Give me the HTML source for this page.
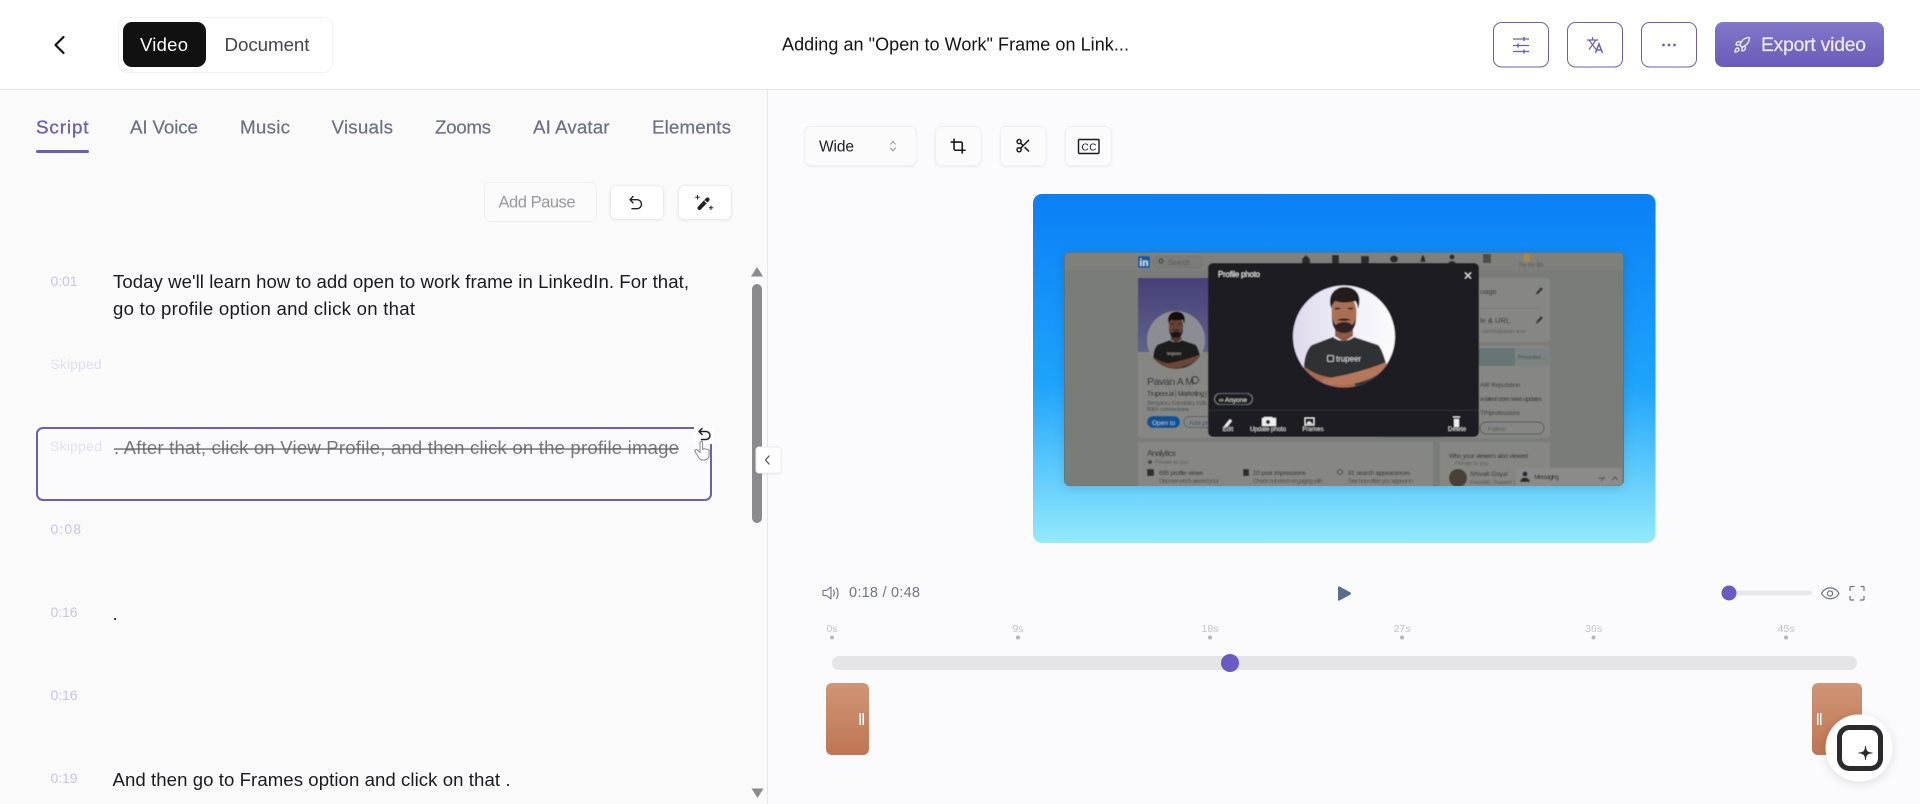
<!DOCTYPE html>
<html lang="en"><head><meta charset="utf-8"><title>Video editor</title>
<style>html,body{margin:0;padding:0;width:1920px;height:804px;overflow:hidden;background:#fbfbfd}svg{display:block}text{white-space:pre}</style></head>
<body>
<svg xmlns="http://www.w3.org/2000/svg" width="1920" height="804" viewBox="0 0 1920 804" font-family="'Liberation Sans',sans-serif">
<defs>
<linearGradient id="exp" x1="0" y1="0" x2="0" y2="1"><stop offset="0" stop-color="#8277cb"/><stop offset="1" stop-color="#6a5bb9"/></linearGradient>
<linearGradient id="blue" x1="0" y1="0" x2="0" y2="1"><stop offset="0" stop-color="#0a7ff6"/><stop offset=".55" stop-color="#1ea4fb"/><stop offset="1" stop-color="#93eafc"/></linearGradient>
<linearGradient id="clip" x1="0" y1="0" x2="0" y2="1"><stop offset="0" stop-color="#cf9676"/><stop offset="1" stop-color="#bf7552"/></linearGradient>
<linearGradient id="cover" x1="0" y1="0" x2="0" y2="1"><stop offset="0" stop-color="#45417a"/><stop offset="1" stop-color="#62618a"/></linearGradient>
<linearGradient id="phbg" x1="0" y1="0" x2="1" y2="0"><stop offset="0" stop-color="#dedaee"/><stop offset=".6" stop-color="#f2f0f9"/><stop offset="1" stop-color="#fbfbfd"/></linearGradient>
<clipPath id="c1"><circle cx="1344" cy="336.500" r="51"/></clipPath>
<clipPath id="c2"><circle cx="1176" cy="340" r="29"/></clipPath>
<clipPath id="scr"><rect x="1064" y="252" width="560" height="234" rx="6"/></clipPath>
<filter id="soft" x="-5%" y="-5%" width="110%" height="110%"><feGaussianBlur stdDeviation=".45"/></filter>
<filter id="sh" x="-10%" y="-10%" width="120%" height="125%"><feDropShadow dx="0" dy="2" stdDeviation="5" flood-color="#000" flood-opacity=".25"/></filter>
<filter id="sh2" x="-30%" y="-30%" width="160%" height="160%"><feDropShadow dx="0" dy="2" stdDeviation="5" flood-color="#000" flood-opacity=".12"/></filter>
<filter id="sh3" x="-20%" y="-20%" width="140%" height="140%"><feDropShadow dx="0" dy="1" stdDeviation="1" flood-color="#000" flood-opacity=".07"/></filter>
<g id="person">
<path d="M1335 320h18v16l-9 6-9-6z" fill="#8d5a44"/>
<path d="M1304 368c0-9 3-19 8-23l21-8c6 5 15 5 21 0l24 8c4 4 6 12 8 18l-6 14-8 14h-58l-10-16z" fill="#2f3234"/>
<ellipse cx="1344" cy="313" rx="12.500" ry="19.500" fill="#a96f56"/>
<path d="M1331.500 309c-5-13 3-22 13-22 12 0 18 9 13.500 22-.5-4-1.500-7-3-8-7 2-14 2-20 0-1.500 2-3 4-3.500 8z" fill="#211d1c"/>
<path d="M1332 316c1 5 2 8 4 9 3-4 13-4 16 0 2-1 3-4 4-9 .5 9-2 17-12 17s-12.500-8-12-17z" fill="#2f2420"/>
<path d="M1337 320c3-2 11-2 14 0-4 1-10 1-14 0z" fill="#2a1f1b"/>
<path d="M1335 308.500h5M1348 308.500h5" stroke="#1d1715" stroke-width="1.500"/>
<path d="M1305 367c5 4 11 7 18 9 10 2 20 5 28 6 4 1 6 3 3 5l-16 1c-12-2-27-8-37-19z" fill="#a96a50"/>
<path d="M1386 362c-16 7-38 13-62 17-3 1-3 4 0 5 22 3 45-1 60-14 2-2 3-5 2-8z" fill="#b4775c"/>
</g>
</defs>

<!-- backgrounds -->
<rect width="1920" height="804" fill="#fbfbfd"/>
<rect y="90" width="767" height="714" fill="#fafafb"/>
<rect x="767" y="90" width="1" height="714" fill="#e7e7ea"/>
<rect width="1920" height="89" fill="#fff"/>
<rect y="89" width="1920" height="1" fill="#e6e6e8"/>

<!-- top bar -->
<path d="M63.500 37l-8 8 8 8" fill="none" stroke="#111" stroke-width="2.200" stroke-linecap="round" stroke-linejoin="round"/>
<rect x="118.500" y="17.500" width="214" height="55" rx="9" fill="#fff" stroke="#f1f1f3"/>
<rect x="123" y="22" width="83" height="45" rx="9" fill="#111"/>
<text x="140" y="51" font-size="18.500" fill="#fff" textLength="48" lengthAdjust="spacing">Video</text>
<text x="224.500" y="51" font-size="18.800" fill="#44444c" textLength="85" lengthAdjust="spacing">Document</text>
<text x="782" y="50.500" font-size="18" fill="#141414" textLength="347" lengthAdjust="spacing">Adding an "Open to Work" Frame on Link...</text>

<g fill="#fff" stroke="#6c5db8" stroke-width="1">
<rect x="1493.500" y="22.500" width="55" height="44.500" rx="8"/>
<rect x="1567.500" y="22.500" width="55" height="44.500" rx="8"/>
<rect x="1641.500" y="22.500" width="55" height="44.500" rx="8"/>
</g>
<g fill="none" stroke="#6c5db8" stroke-width="1.200">
<path d="M1513 39h16M1513 45.500h16M1513 51.500h16"/><path d="M1524 37v4M1518 43.500v4M1524 49.500v4" stroke-width="1.500"/>
<path d="M1587 40h11M1592.500 37v3M1589 40l7 9.500M1596 40l-7 9.500"/><path d="M1595.500 53l3.500-9 3.500 9M1597 50h4.500" stroke-width="1.500"/>
</g>
<g fill="#6c5db8"><circle cx="1663.500" cy="45" r="1.400"/><circle cx="1669" cy="45" r="1.400"/><circle cx="1674.500" cy="45" r="1.400"/></g>
<rect x="1715" y="22" width="169" height="45" rx="8" fill="url(#exp)"/>
<g transform="translate(1733 36) scale(.75)" fill="none" stroke="#f2f0fa" stroke-width="1.800" stroke-linecap="round" stroke-linejoin="round">
<path d="M4.500 16.500c-1.500 1.260-2 5-2 5s3.740-.5 5-2c.71-.84.7-2.130-.09-2.910a2.180 2.180 0 0 0-2.910-.09z"/>
<path d="m12 15-3-3a22 22 0 0 1 2-3.950A12.880 12.880 0 0 1 22 2c0 2.720-.78 7.500-6 11a22.350 22.350 0 0 1-4 2z"/>
<path d="M9 12H4s.55-3.030 2-4c1.620-1.080 5 0 5 0"/><path d="M12 15v5s3.030-.55 4-2c1.080-1.620 0-5 0-5"/></g>
<text x="1761" y="51" font-size="19.300" fill="#eeecf8" stroke="#eeecf8" stroke-width=".2" textLength="105" lengthAdjust="spacing">Export video</text>

<!-- tabs -->
<g font-size="18.800" fill="#6c7082" stroke="#6c7082" stroke-width=".2">
<text x="36" y="133.500" fill="#6c5db8" stroke="#6c5db8" stroke-width=".35" textLength="52.500" lengthAdjust="spacing">Script</text>
<text x="130" y="133.500" textLength="68" lengthAdjust="spacing">AI Voice</text>
<text x="240" y="133.500" textLength="50" lengthAdjust="spacing">Music</text>
<text x="331.500" y="133.500" textLength="61.500" lengthAdjust="spacing">Visuals</text>
<text x="435" y="133.500" textLength="56" lengthAdjust="spacing">Zooms</text>
<text x="533" y="133.500" textLength="76.500" lengthAdjust="spacing">AI Avatar</text>
<text x="652" y="133.500" textLength="79" lengthAdjust="spacing">Elements</text>
</g>
<rect x="36" y="150" width="53" height="3" rx="1.500" fill="#6c5db8"/>

<!-- tool row -->
<rect x="484.500" y="182.500" width="112" height="39" rx="6" fill="#fafafa" stroke="#f0f0f2"/>
<text x="498.500" y="207.500" font-size="16.500" fill="#9a9a9e" textLength="77" lengthAdjust="spacing">Add Pause</text>
<rect x="610.500" y="185.500" width="53" height="34" rx="6" fill="#fff" stroke="#ececef" filter="url(#sh3)"/>
<rect x="678.500" y="185.500" width="53" height="34" rx="6" fill="#fff" stroke="#ececef" filter="url(#sh3)"/>
<path d="M633 196.500l-3 3.200 3 3.200M630.500 199.700h6.500a4.500 4.500 0 0 1 0 9h-5" fill="none" stroke="#222" stroke-width="1.400" stroke-linecap="round" stroke-linejoin="round"/>
<path d="M699.500 208l8-8.500" stroke="#222" stroke-width="4" stroke-linecap="round"/>
<path d="M704.500 200.500l2.500 2.500" stroke="#fff" stroke-width="1"/>
<path d="M697.500 195v4.500M695.300 197.200h4.400M711 205.500v4.500M708.800 207.800h4.400" stroke="#222" stroke-width="1"/>

<!-- script -->
<g font-size="14" fill="#c8c4ea">
<text x="50.500" y="286" textLength="27" lengthAdjust="spacing">0:01</text>
<text x="50.500" y="369" fill="#dfdcf3" textLength="51" lengthAdjust="spacing">Skipped</text>
<text x="50.500" y="534" textLength="30.500" lengthAdjust="spacing">0:08</text>
<text x="50.500" y="617" textLength="27" lengthAdjust="spacing">0:16</text>
<text x="50.500" y="700" textLength="27" lengthAdjust="spacing">0:16</text>
<text x="50.500" y="783" textLength="27" lengthAdjust="spacing">0:19</text>
</g>
<g font-size="18.600" fill="#1b1b1f">
<text x="113" y="288" textLength="576" lengthAdjust="spacing">Today we'll learn how to add open to work frame in LinkedIn. For that,</text>
<text x="113" y="315" textLength="302" lengthAdjust="spacing">go to profile option and click on that</text>
<text x="112.500" y="786" textLength="398" lengthAdjust="spacing">And then go to Frames option and click on that .</text>
<text x="112.500" y="620">.</text>
</g>
<rect x="37" y="428" width="674" height="72" rx="6" fill="#fbfbfd" stroke="#6c5db8" stroke-width="2"/>
<text x="50" y="451" font-size="14" fill="#e2e0f1" textLength="52" lengthAdjust="spacing">Skipped</text>
<text x="114" y="454" font-size="18.600" fill="#77777c" textLength="565" lengthAdjust="spacing">. After that, click on View Profile, and then click on the profile image</text>
<rect x="114" y="448.400" width="565" height="1.300" fill="#606066"/>
<rect x="694" y="426" width="19" height="18" fill="#fff"/>
<path d="M702 428.500l-3 3 3 3M699.500 431.500h6.500a4 4 0 0 1 0 8h-4.500" fill="none" stroke="#222" stroke-width="1.500" stroke-linecap="round" stroke-linejoin="round"/>
<path d="M700 442c1-1.500 2.600-1 2.600.5v7l1.500-.7 1.500.2 1.800.3 1.700.7v5c0 3-2 5-5 5h-1c-2.500 0-3.500-1.200-4.700-3l-3.400-5.500c-.7-1.500 1.200-2.600 2.400-1.500l2.600 2.500z" fill="#fff" stroke="#85858a" stroke-width="1"/>

<!-- scrollbar and collapse -->
<rect x="752" y="284" width="10" height="239" rx="5" fill="#8b8b8d"/>
<path d="M757 267l6 9.500h-12z" fill="#8b8b8d"/>
<path d="M757.500 798l-6-9.500h12z" fill="#8b8b8d"/>
<rect x="756" y="447" width="25" height="26" rx="3" fill="#fff" stroke="#ececef" filter="url(#sh3)"/>
<path d="M769 456l-3.500 4 3.500 4" fill="none" stroke="#555" stroke-width="1.300" stroke-linecap="round" stroke-linejoin="round"/>

<!-- right tool row -->
<g fill="#fbfbfc" stroke="#f0f0f3" filter="url(#sh3)">
<rect x="805" y="126.500" width="111" height="39" rx="6"/>
<rect x="935.500" y="126.500" width="45.500" height="39" rx="6"/>
<rect x="1000.500" y="126.500" width="45.500" height="39" rx="6"/>
<rect x="1065.500" y="126.500" width="45.500" height="39" rx="6"/>
</g>
<text x="819" y="151.500" font-size="15.500" fill="#202024" textLength="35" lengthAdjust="spacing">Wide</text>
<path d="M890.500 144.500l2.500-3.200 2.500 3.200M890.500 147.800l2.500 3.200 2.500-3.200" fill="none" stroke="#8c8c92" stroke-width="1"/>
<g transform="translate(950 138) scale(.68)" fill="none" stroke="#18181c" stroke-width="2.300"><path d="M6 1v15a2 2 0 0 0 2 2h15"/><path d="M18 23V8a2 2 0 0 0-2-2H1"/></g>
<g transform="translate(1015 137.500) scale(.68)" fill="none" stroke="#18181c" stroke-width="2.200" stroke-linecap="round"><circle cx="6" cy="6" r="3"/><circle cx="6" cy="18" r="3"/><path d="M8.120 8.120 12 12M20 4 8.120 15.880M14.800 14.800 20 20"/></g>
<rect x="1078.500" y="139.500" width="20.500" height="14" rx="1" fill="none" stroke="#18181c" stroke-width="1.400"/>
<text x="1081.500" y="150.500" font-size="10" fill="#18181c" textLength="15" lengthAdjust="spacing">CC</text>

<!-- video -->
<rect x="1033" y="194" width="622.500" height="349" rx="9" fill="url(#blue)"/>
<rect x="1064" y="252" width="560" height="234" rx="6" fill="#000" filter="url(#sh)" opacity=".5"/>
<g clip-path="url(#scr)"><g filter="url(#soft)">
<rect x="1064" y="252" width="560" height="234" fill="#7a7b77"/>
<rect x="1064" y="252" width="560" height="18" fill="#7f807c"/>
<!-- linkedin nav -->
<rect x="1138" y="256" width="12" height="12" rx="1" fill="#0f5c9c"/>
<text x="1139.500" y="266" font-size="10" font-weight="700" fill="#dfe6ee" textLength="9" lengthAdjust="spacing">in</text>
<rect x="1153" y="256" width="50" height="12" rx="6" fill="#7a7b78" stroke="#6c6d6a" stroke-width=".5"/>
<circle cx="1161" cy="261" r="2" fill="none" stroke="#222" stroke-width=".9"/>
<text x="1168" y="265" font-size="7" fill="#565654">Search</text>
<g fill="#2c2c2c">
<path d="M1302 259l4-4 4 4v4h-8z"/><rect x="1332" y="255" width="7" height="9"/><rect x="1361" y="256" width="8" height="7" rx="1"/><ellipse cx="1394" cy="259" rx="4" ry="3.500"/><path d="M1420 262c1-1 1-6 3-7 2 1 2 6 3 7z"/><circle cx="1452" cy="257" r="2.500"/><path d="M1448 264c1-4 7-4 8 0z"/>
<path d="M1483 254h8v9h-8z" opacity=".6"/>
</g>
<rect x="1524" y="254" width="6" height="8" fill="#a28d46"/>
<text x="1518" y="267" font-size="6" fill="#555">Try for $0</text>
<!-- profile card -->
<rect x="1138" y="278" width="240" height="160" rx="3" fill="#868783"/>
<rect x="1138" y="278" width="72" height="74" fill="url(#cover)"/>
<circle cx="1176" cy="340" r="29" fill="#8c8d94"/>
<g clip-path="url(#c2)" style="filter:brightness(.6)"><use href="#person" transform="translate(410 148) scale(.57)"/></g>
<text x="1167" y="355" font-size="4.500" fill="#aaa">trupeer</text>
<text x="1147" y="385" font-size="10.500" fill="#252525" textLength="47" lengthAdjust="spacing">Pavan A M</text>
<circle cx="1195" cy="380" r="3.500" fill="none" stroke="#222" stroke-width=".9"/>
<text x="1147" y="396" font-size="7" fill="#2a2a2a" textLength="60" lengthAdjust="spacing">Trupeer.ai | Marketing |</text>
<text x="1147" y="405" font-size="6" fill="#575755" textLength="60" lengthAdjust="spacing">Bengaluru, Karnataka, India</text>
<text x="1147" y="411" font-size="5.500" fill="#2a3f60" textLength="42" lengthAdjust="spacing">500+ connections</text>
<rect x="1147" y="416" width="33" height="12" rx="6" fill="#0e5392"/>
<text x="1152" y="425" font-size="6.500" fill="#a8bdd2">Open to</text>
<rect x="1184" y="416.500" width="30" height="11" rx="5.500" fill="none" stroke="#44506a" stroke-width=".7"/>
<text x="1189" y="425" font-size="6.500" fill="#2a4a6c">Add pr</text>
<!-- analytics -->
<rect x="1138" y="442" width="295" height="50" fill="#868783"/>
<text x="1147" y="456" font-size="8.500" fill="#2a2a2a" textLength="29" lengthAdjust="spacing">Analytics</text>
<text x="1155" y="464" font-size="5.500" fill="#555">Private to you</text>
<circle cx="1150" cy="462" r="2" fill="#444"/>
<rect x="1147" y="469" width="7" height="7" fill="#2e2e2e"/>
<rect x="1243" y="469" width="6" height="7" fill="#2e2e2e"/>
<circle cx="1340" cy="472" r="2.500" fill="none" stroke="#333" stroke-width=".8"/>
<g font-size="6.200" fill="#242424">
<text x="1159" y="475" textLength="44" lengthAdjust="spacing">695 profile views</text>
<text x="1253" y="475" textLength="53" lengthAdjust="spacing">20 post impressions</text>
<text x="1348" y="475" textLength="62" lengthAdjust="spacing">81 search appearances</text>
<text x="1159" y="483" fill="#505050" textLength="60" lengthAdjust="spacing">Discover who's viewed your</text>
<text x="1253" y="483" fill="#505050" textLength="70" lengthAdjust="spacing">Check out who's engaging with</text>
<text x="1348" y="483" fill="#505050" textLength="65" lengthAdjust="spacing">See how often you appear in</text>
</g>
<!-- right column -->
<rect x="1440" y="278" width="110" height="64" rx="3" fill="#868783"/>
<text x="1480" y="294" font-size="7.500" fill="#2a2a2a">uage</text>
<text x="1480" y="323" font-size="7.500" fill="#2a2a2a">le &amp; URL</text>
<text x="1480" y="333" font-size="5.500" fill="#555">.com/in/pavan-a-m</text>
<rect x="1480" y="308" width="60" height=".7" fill="#70716e"/>
<path d="M1536 293l5-6 2 2-5 5-2 .5zM1536 322l5-6 2 2-5 5-2 .5z" fill="#333"/>
<rect x="1440" y="346" width="110" height="92" rx="3" fill="#868783"/>
<rect x="1479" y="348" width="36" height="18" fill="#687476"/>
<rect x="1515" y="348" width="35" height="18" fill="#7b8282"/>
<text x="1518" y="359" font-size="5.500" fill="#444" textLength="28" lengthAdjust="spacing">Promoted ...</text>
<g font-size="6" fill="#2a2a2a"><text x="1480" y="387">AW Reputation</text><text x="1480" y="401" textLength="62" lengthAdjust="spacing">w latest crore news updates</text><text x="1480" y="415">TP/professions</text></g>
<rect x="1480" y="422" width="64" height="12" rx="6" fill="none" stroke="#454545" stroke-width=".7"/>
<text x="1488" y="431" font-size="6" fill="#44546a">Follow</text>
<rect x="1440" y="442" width="110" height="50" fill="#868783"/>
<text x="1449" y="458" font-size="6.300" fill="#242424" textLength="79" lengthAdjust="spacing">Who your viewers also viewed</text>
<text x="1455" y="465" font-size="5.500" fill="#555">Private to you</text>
<circle cx="1458" cy="478" r="9" fill="#4a4038"/>
<text x="1470" y="476" font-size="6.500" fill="#242424">Shivali Goyal</text>
<text x="1470" y="484" font-size="5.500" fill="#4a4a4a">Founder, Trupeer |</text>
<rect x="1516" y="468" width="106" height="18" fill="#8b8c89"/>
<circle cx="1525" cy="474" r="2.500" fill="#2a2a2a"/><path d="M1520 482c1-6 9-6 10 0z" fill="#2a2a2a"/>
<text x="1534" y="479" font-size="6.500" fill="#2a2a2a" textLength="25" lengthAdjust="spacing">Messaging</text>
<path d="M1598 478h5M1601 481l4-4M1612 480l3-3 3 3" fill="none" stroke="#333" stroke-width=".8"/>
<!-- modal -->
<rect x="1208" y="263" width="271" height="174" rx="5" fill="#1c1f23"/>
<text x="1218" y="277" font-size="8" fill="#eee" textLength="42" lengthAdjust="spacing">Profile photo</text>
<path d="M1465 272.500l6 6M1471 272.500l-6 6" stroke="#eee" stroke-width="1"/>
<circle cx="1344" cy="336.500" r="51" fill="url(#phbg)"/>
<g clip-path="url(#c1)"><use href="#person"/></g>
<rect x="1327.500" y="355.500" width="6" height="6" rx="1" fill="none" stroke="#ddd" stroke-width=".8"/>
<text x="1336" y="361.500" font-size="8" fill="#ddd" textLength="25" lengthAdjust="spacing">trupeer</text>
<rect x="1214.500" y="393.500" width="38" height="11" rx="5.500" fill="none" stroke="#999" stroke-width=".6"/>
<text x="1219" y="402" font-size="6.500" fill="#ddd" textLength="28" lengthAdjust="spacing">∞ Anyone</text>
<rect x="1208" y="410" width="271" height=".7" fill="#363a3f"/>
<path d="M1225 425l5-6 2 2-5 6-3 1zM1264 417h8l1 1h3v8h-14v-8h2z" fill="#eee"/>
<circle cx="1268" cy="422" r="2" fill="#1c1f23"/>
<rect x="1305" y="418" width="9" height="7" fill="none" stroke="#eee" stroke-width="1"/>
<path d="M1306 424l3-3 4 3z" fill="#eee"/>
<path d="M1453 416.500h7v1h-7zM1454 419h5v8h-5z" fill="#eee"/>
<g font-size="6.300" fill="#ddd" text-anchor="middle">
<text x="1228" y="431">Edit</text><text x="1268" y="431" textLength="36" lengthAdjust="spacing">Update photo</text><text x="1313" y="431">Frames</text><text x="1457" y="431">Delete</text>
</g>
</g></g>

<!-- player -->
<path d="M823 590.500h3.500l4.500-3.500v12l-4.500-3.500H823z" fill="none" stroke="#6c7082" stroke-width="1.100" stroke-linejoin="round"/>
<path d="M833.500 590c1 1.800 1 4.200 0 6M836.500 588c2 3 2 7.500 0 10.500" fill="none" stroke="#6c7082" stroke-width="1.100" stroke-linecap="round"/>
<text x="849" y="597" font-size="14.500" fill="#70747f" textLength="71" lengthAdjust="spacing">0:18 / 0:48</text>
<path d="M1339.500 586.500l11 6c.8.500.8 1.500 0 2l-11 6c-.8.400-1.500 0-1.500-1v-12c0-1 .7-1.400 1.500-1z" fill="#5b6d8b"/>
<rect x="1729" y="590.500" width="83" height="5" rx="2.500" fill="#e8e8ec"/>
<circle cx="1729" cy="593" r="7.500" fill="#6a5ac6"/>
<path d="M1821.500 593.500c4-7.500 13.500-7.500 17.500 0-4 7-13.500 7-17.500 0z" fill="none" stroke="#6c7082" stroke-width="1.200"/>
<circle cx="1830" cy="593.500" r="2.600" fill="none" stroke="#6c7082" stroke-width="1.200"/>
<path d="M1850 591v-3.500a1 1 0 0 1 1-1h3.500M1860.500 586.500h2.500a1 1 0 0 1 1 1v3.500M1864 596v3a1 1 0 0 1-1 1h-3M1854 600h-3a1 1 0 0 1-1-1v-3" fill="none" stroke="#6c7082" stroke-width="1.200"/>

<!-- timeline -->
<g font-size="10.500" fill="#c4c4c8" text-anchor="middle">
<text x="832" y="632">0s</text><text x="1018" y="632">9s</text><text x="1210" y="632">18s</text><text x="1402" y="632">27s</text><text x="1593.500" y="632">36s</text><text x="1786" y="632">45s</text>
</g>
<g fill="#b6b6ba">
<circle cx="832" cy="637.500" r="2"/><circle cx="1018" cy="637.500" r="2"/><circle cx="1210" cy="637.500" r="2"/><circle cx="1402" cy="637.500" r="2"/><circle cx="1593.500" cy="637.500" r="2"/><circle cx="1786" cy="637.500" r="2"/>
</g>
<rect x="832" y="656" width="1025" height="14" rx="7" fill="#e5e5e8"/>
<circle cx="1230" cy="663" r="9" fill="#6a5ac6"/>
<rect x="826" y="683" width="43" height="72" rx="6" fill="url(#clip)"/>
<rect x="859.500" y="713" width="1.500" height="12" fill="#fff"/><rect x="862.500" y="713" width="1.500" height="12" fill="#fff"/>
<rect x="1812" y="683" width="50" height="72" rx="6" fill="url(#clip)"/>
<rect x="1817" y="713" width="1.500" height="12" fill="#fff"/><rect x="1820" y="713" width="1.500" height="12" fill="#fff"/>

<!-- floating button -->
<circle cx="1859" cy="748" r="33.500" fill="#fff" filter="url(#sh2)"/>
<rect x="1839.500" y="727.500" width="41" height="41" rx="10" fill="#fff" stroke="#2b2b2d" stroke-width="5"/>
<path d="M1865.500 746c.3 5 1.500 6.700 7 7-5.500.3-6.700 2-7 7-.3-5-1.500-6.700-7-7 5.500-.3 6.700-2 7-7z" fill="#2b2b2d" stroke="#2b2b2d" stroke-width=".8"/>
</svg>
</body></html>
